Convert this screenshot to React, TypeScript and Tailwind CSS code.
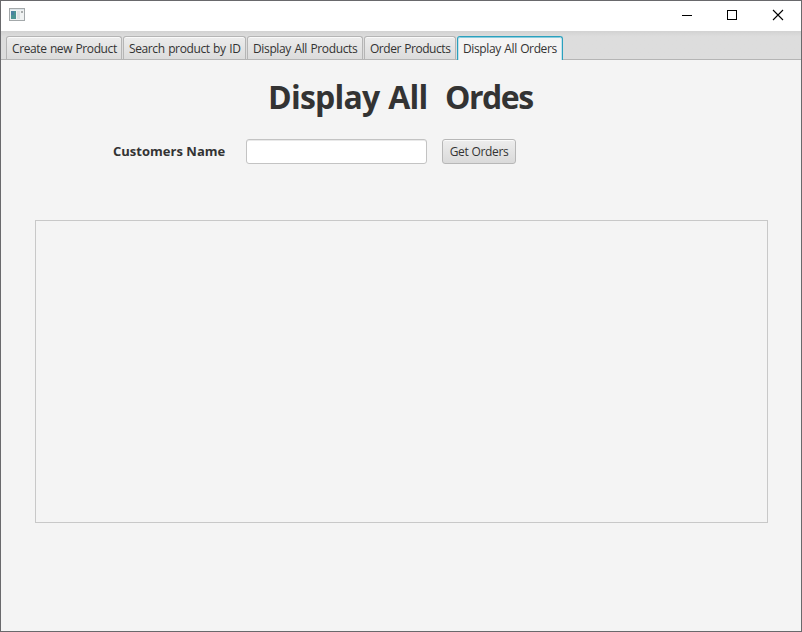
const tabs = [
  { label: 'Create new Product', box: 'w-[116px]', text: 'tracking-[-0.4px]' },
  { label: 'Search product by ID', box: 'w-[123px]', text: 'tracking-[-0.38px]' },
  { label: 'Display All Products', box: 'w-[116px]', text: 'tracking-[-0.36px]' },
  { label: 'Order Products', box: 'w-[92px]', text: 'tracking-[-0.46px]' },
];

function TitleBar() {
  return (
    <header className="flex h-[30px] shrink-0 items-start justify-between bg-white">
      <svg width="16" height="14" viewBox="0 0 16 14" className="ml-2 mt-[7px]">
        <rect x="0.5" y="0.5" width="15" height="12" fill="#f0f2f2" stroke="#a3a8aa" />
        <rect x="1" y="1" width="14" height="1" fill="#dce4e8" />
        <rect x="2" y="3" width="5" height="8" fill="#4d9492" />
        <rect x="2" y="3" width="3" height="4" fill="#4b82a0" />
        <rect x="8" y="3" width="3" height="8" fill="#dfe2e2" />
        <rect x="12" y="3" width="2" height="2" fill="#a8acac" />
      </svg>
      <div className="flex">
        <svg width="138" height="30" viewBox="0 0 138 30" fill="none" stroke="#000">
          <path d="M19 14.5h10M64.5 9.5h9v9h-9z" shapeRendering="crispEdges" />
          <path d="M110 9l10 10M120 9l-10 10" strokeWidth="1.1" />
        </svg>
      </div>
    </header>
  );
}

export default function App() {
  return (
    <div className="flex h-[632px] w-[802px] flex-col overflow-hidden border border-[#69696c] bg-[#f4f4f4] font-['Open_Sans','Noto_Sans',sans-serif] text-xs text-[#333]">
      <TitleBar />
      <nav className="flex h-[29px] shrink-0 items-end gap-px border-b border-[#b5b5b5] bg-linear-to-b from-[#d2d2d2] to-[#dddddd] to-20% pl-[5px]">
        {tabs.map((t) => (
          <div
            key={t.label}
            className={`flex h-[23px] items-center whitespace-pre rounded-t-[3px] border border-b-0 border-[#b5b5b5] bg-linear-to-b from-[#ececec] to-[#dcdcdc] pl-[5px] pt-0.5 [word-spacing:0.7px] shadow-[inset_0_1px_0_#fafafa] ${t.box} ${t.text}`}
          >
            {t.label}
          </div>
        ))}
        <div className="-mb-px flex h-6 w-[106px] items-center whitespace-pre rounded-t-[3px] border border-b-0 border-[#2ba0bd] bg-[#f4f4f4] pl-[5px] pt-px tracking-[-0.37px] [word-spacing:0.6px] shadow-[inset_1px_0_0_#bfe3ed,inset_-1px_0_0_#bfe3ed,inset_0_1px_0_#8accdd]">
          Display All Orders
        </div>
      </nav>
      <main className="flex flex-1 flex-col">
        <h1 className="mt-[15px] h-[44px] whitespace-pre pl-[267px] text-[32px] font-bold leading-[44px] tracking-[-0.77px] [word-spacing:1.2px]">
          Display All  <span className="tracking-[-1.5px]">Ordes</span>
        </h1>
        <div className="mt-[20px] flex h-[25px] items-center pl-[112px]">
          <label htmlFor="customer" className="w-[133px] whitespace-pre text-[13px] font-bold tracking-[0.02px]">
            Customers Name
          </label>
          <input
            id="customer"
            className="h-[25px] w-[181px] rounded-[3px] border border-[#c3c3c3] bg-white px-2 shadow-[inset_0_1px_0_#e9e9e9] outline-none"
          />
          <button className="ml-[15px] h-[25px] w-[74px] whitespace-pre rounded-[3px] border border-[#b7b7b7] bg-linear-to-b from-[#ededed] to-[#dadada] pt-px tracking-[-0.38px] [word-spacing:0.5px] shadow-[inset_0_1px_0_#fafafa]">
            Get Orders
          </button>
        </div>
        <section className="ml-[34px] mt-[56px] h-[303px] w-[733px] border border-[#c8c8c8]" />
      </main>
    </div>
  );
}
